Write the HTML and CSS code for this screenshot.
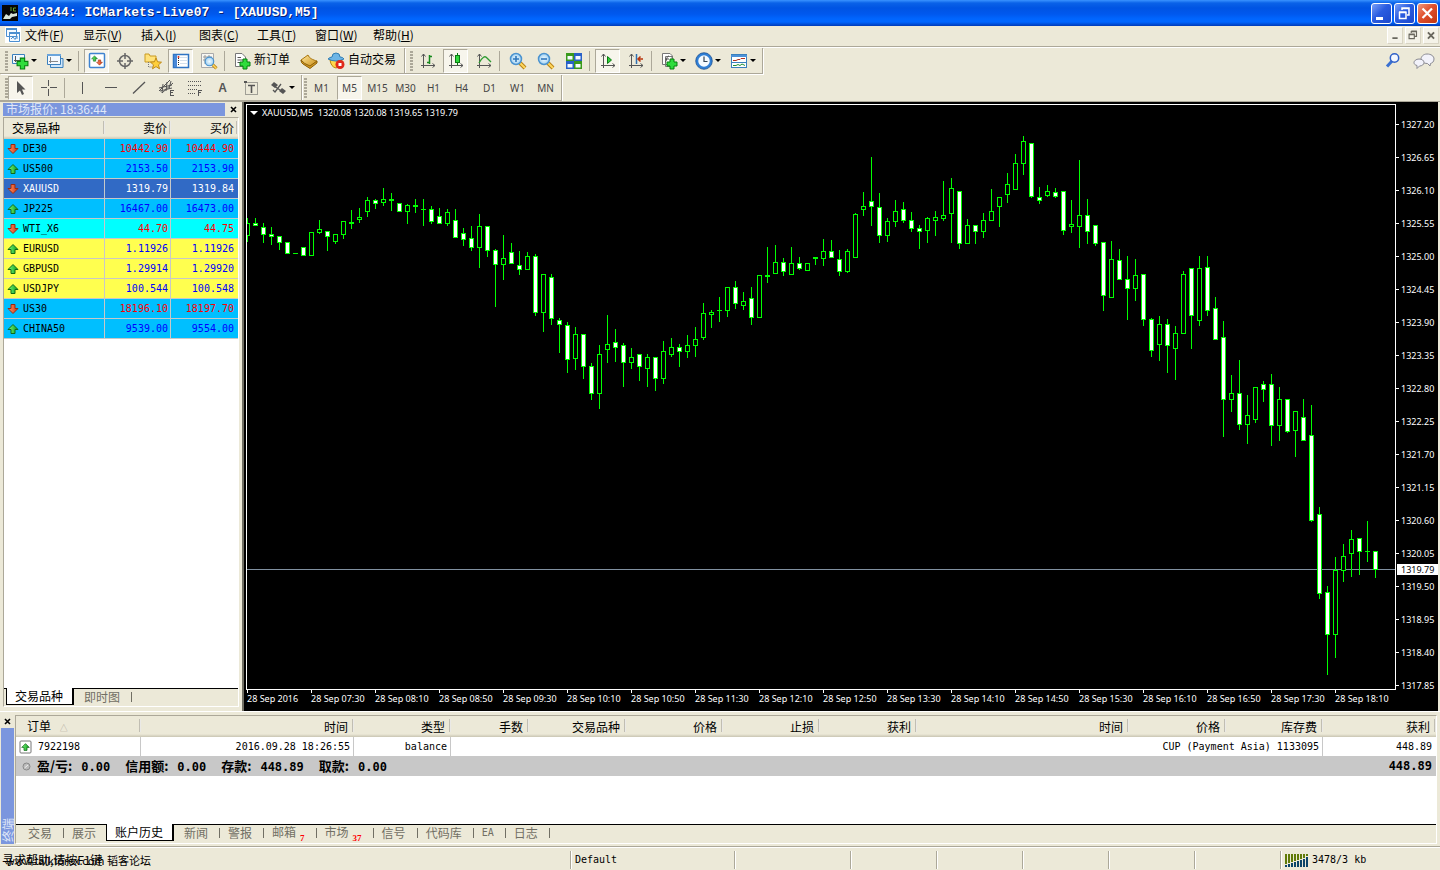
FILE: index.html
```html
<!DOCTYPE html>
<html lang="zh-CN">
<head>
<meta charset="utf-8">
<title>810344: ICMarkets-Live07 - [XAUUSD,M5]</title>
<link rel="stylesheet" href="styles.css">
</head>
<body>
<svg class="defs" aria-hidden="true">
  <defs>
    <linearGradient id="gUp" x1="0" x2="1"><stop offset="0" stop-color="#7dfc7d"/><stop offset="1" stop-color="#0a9a1a"/></linearGradient>
    <linearGradient id="gDown" x1="0" x2="1"><stop offset="0" stop-color="#ff9a70"/><stop offset="1" stop-color="#d63208"/></linearGradient>
    <linearGradient id="gGold" x1="0" x2="1" y2="1"><stop offset="0" stop-color="#ffe9a0"/><stop offset="1" stop-color="#c98a10"/></linearGradient>
    <radialGradient id="gGlass"><stop offset="0" stop-color="#f2fbff"/><stop offset="1" stop-color="#9fd0f2"/></radialGradient>
    <symbol id="up" viewBox="0 0 12 12"><path d="M6 1.500 11 6.500H8V10.500H4V6.500H1Z" fill="url(#gUp)" stroke="#106a18"/></symbol>
    <symbol id="down" viewBox="0 0 12 12"><path d="M6 10.500 11 5.500H8V1.500H4V5.500H1Z" fill="url(#gDown)" stroke="#9a2a10"/></symbol>
    <symbol id="plus" viewBox="0 0 12 12"><path d="M4 1H8V4H11V8H8V11H4V8H1V4H4Z" fill="#2fdc3c" stroke="#07800f"/></symbol>
    <symbol id="axes" viewBox="0 0 18 18"><path d="M4.500 2V16M2 13.500H16M2.500 4.500 4.500 2 6.500 4.500M13.500 11.500 16 13.500 13.500 15.500" fill="none" stroke="#555"/></symbol>
    <symbol id="lens" viewBox="0 0 18 18"><path d="M11 11 16 16" stroke="#b98316" stroke-width="4"/><path d="M11 11 16 16" stroke="#ffd75c" stroke-width="2"/><circle cx="7" cy="7" r="5.500" fill="url(#gGlass)" stroke="#4b93cf" stroke-width="1.500"/></symbol>
  </defs>
</svg>

<header class="titlebar">
  <svg class="app-icon" viewBox="0 0 16 16"><rect width="16" height="16" fill="#050505"/><path d="M1 14 4 9 7 11 9 8 11 9 15 8V11L10 12 8 14Z" fill="#d8e4d8"/><path d="M9 2V6M14 3H11.500V6H14" stroke="#65a52a" fill="none"/></svg>
  <h1 class="title">810344: ICMarkets-Live07 - [XAUUSD,M5]</h1>
  <div class="win-buttons">
    <button class="win" aria-label="最小化"><svg viewBox="0 0 19 19"><path d="M4 13H11V16H4Z" fill="#fff"/></svg></button>
    <button class="win" aria-label="还原"><svg viewBox="0 0 19 19"><path d="M7 6V4H14V11H12M4.500 8.500H11V14.500H4.500ZM4 8H11.500M7 4.500H14.500" fill="none" stroke="#fff" stroke-width="1.500"/></svg></button>
    <button class="win win-close" aria-label="关闭"><svg viewBox="0 0 19 19"><path d="M4.500 4.500 14 14M14 4.500 4.500 14" stroke="#fff" stroke-width="2.200"/></svg></button>
  </div>
</header>

<nav class="menubar">
  <svg class="doc-icon" viewBox="0 0 16 16"><rect width="16" height="16" fill="#fff"/><path d="M1.500 1.500H11.500V9.500H1.500ZM4.500 5.500H14.500V14.500H4.500Z" fill="#f4faff" stroke="#4b8fd0"/><path d="M1 2H12M4 6H15" stroke="#4b8fd0" stroke-width="2"/><path d="M6 12 8 10 10 12.500 12 9V12" fill="none" stroke="#4b8fd0"/></svg>
  <button class="menu">文件(<u>F</u>)</button>
  <button class="menu">显示(<u>V</u>)</button>
  <button class="menu">插入(<u>I</u>)</button>
  <button class="menu">图表(<u>C</u>)</button>
  <button class="menu">工具(<u>T</u>)</button>
  <button class="menu">窗口(<u>W</u>)</button>
  <button class="menu">帮助(<u>H</u>)</button>
  <div class="mdi-buttons">
    <button class="mdi" aria-label="最小化图表"><svg viewBox="0 0 16 16"><path d="M5 10H11V12H5Z" fill="#69675e"/></svg></button>
    <button class="mdi" aria-label="还原图表"><svg viewBox="0 0 16 16"><path d="M6 5V3.500H12V9H10M3.500 7H9.500V11.500H3.500ZM3 6.500H10M6 3H12.500" fill="none" stroke="#69675e" stroke-width="1.300"/></svg></button>
    <button class="mdi" aria-label="关闭图表"><svg viewBox="0 0 16 16"><path d="M4.500 4.500 11.500 11.500M11.500 4.500 4.500 11.500" stroke="#69675e" stroke-width="2.200"/></svg></button>
  </div>
</nav>

<div class="toolrow">
  <div class="toolbar main">
    <i class="grip"></i>
    <button class="tool drop" aria-label="新图表"><svg viewBox="0 0 18 18"><path d="M1.500 2.500H13.500V11.500H1.500Z" fill="#eef7ff" stroke="#3a80bd"/><path d="M4.500 4V10M3 8.500H9" stroke="#555"/><use href="#plus" x="5" y="5" width="13" height="13"/></svg><i class="caret"></i></button>
    <button class="tool drop" aria-label="图表配置"><svg viewBox="0 0 18 18"><path d="M4.500 6.500H17V15.500H4.500Z" fill="#cfe6fa" stroke="#3a80bd"/><path d="M1.500 2.500H14.500V12.500H1.500Z" fill="#f3f9ff" stroke="#3a80bd"/><path d="M1 3H15" stroke="#6aa5dc" stroke-width="2"/><path d="M4.500 5V11M3 9.500H12" stroke="#888"/></svg><i class="caret"></i></button>
    <i class="sep"></i>
    <button class="tool on" aria-label="市场报价"><svg viewBox="0 0 18 18"><rect x="1.500" y="1.500" width="15" height="14" rx="1" fill="#fff" stroke="#3f83d0" stroke-width="1.500"/><use href="#up" x="3" y="3" width="7" height="7"/><use href="#down" x="8" y="7" width="7" height="7"/></svg></button>
    <button class="tool" aria-label="数据窗口"><svg viewBox="0 0 18 18"><circle cx="9" cy="9" r="5.500" fill="none" stroke="#666" stroke-width="1.500"/><path d="M9 1V7M9 11V17M1 9H7M11 9H17" stroke="#666" stroke-width="1.500"/></svg></button>
    <button class="tool" aria-label="导航"><svg viewBox="0 0 18 18"><path d="M1 4V2H5L6 4H12V10H1Z" fill="#ffe27a" stroke="#c99a22"/><path d="M4.500 10V15H9" stroke="#777" stroke-dasharray="1 1" fill="none"/><path d="M12 6 13.600 9.800 17.500 10.200 14.500 12.800 15.500 16.800 12 14.600 8.500 16.800 9.500 12.800 6.500 10.200 10.400 9.800Z" fill="#ffcf3a" stroke="#c08a18"/></svg></button>
    <button class="tool on" aria-label="终端"><svg viewBox="0 0 18 18"><rect x="1.500" y="2.500" width="15" height="13" fill="#fff" stroke="#2f74c4" stroke-width="1.500"/><path d="M2 3H5V15H2Z" fill="#4a89d8"/><path d="M6.500 4V14" stroke="#222" stroke-dasharray="1 1"/><path d="M8 5.500H15M8 8.500H15M8 11.500H15" stroke="#d3dfec"/><circle cx="6.500" cy="5" r="1" fill="#e03020"/></svg></button>
    <button class="tool" aria-label="策略测试"><svg viewBox="0 0 18 18"><path d="M1.500 1.500H13.500V15.500H1.500Z" fill="#f7f7f2" stroke="#aaa"/><path d="M3 5H12M3 8H12M5 3V12M9 3V12" stroke="#999"/><use href="#lens" x="4" y="4" width="14" height="14"/></svg></button>
    <i class="sep"></i>
    <button class="tool label"><svg viewBox="0 0 18 18"><path d="M2.500 1.500H9L12.500 5V14.500H2.500Z" fill="#fff" stroke="#777"/><path d="M4.500 5.500H8M4.500 8H10M4.500 10.500H8" stroke="#555"/><use href="#plus" x="6" y="6" width="12" height="12"/></svg><span>新订单</span></button>
    <button class="tool" aria-label="MetaEditor"><svg viewBox="0 0 18 18"><path d="M1 8 8 3C9 6 13 8 17 9L10 15Q3 13 1 8Z" fill="url(#gGold)" stroke="#a8740c"/><path d="M1 8Q1 11 3 12L10 16.500 17 11V9L10 14Q4 12 1 8Z" fill="#d39a20" stroke="#8c5f0a"/></svg></button>
    <button class="tool label"><svg viewBox="0 0 18 18"><path d="M3 8Q4 15 9 16 14 15 15 8Z" fill="#ffd84a" stroke="#b8860b"/><path d="M1 7Q3 5 5 5 5 1 9 1 13 1 13 5 16 5 17 7 9 11 1 7Z" fill="#6db5e6" stroke="#337fb5"/><circle cx="13" cy="12.500" r="4.500" fill="#e02a1a"/><rect x="11.500" y="11" width="3" height="3" fill="#fff"/></svg><span>自动交易</span></button>
  </div>
  <div class="toolbar">
    <i class="grip"></i>
    <button class="tool" aria-label="柱状图"><svg viewBox="0 0 18 18"><use href="#axes"/><path d="M10.500 3V12M8 10.500H10.500M10.500 4.500H13" stroke="#16891c" stroke-width="1.500"/></svg></button>
    <button class="tool on" aria-label="阴阳烛"><svg viewBox="0 0 18 18"><use href="#axes"/><path d="M10.500 1V13" stroke="#0a7a12"/><rect x="8.500" y="3.500" width="4" height="7" fill="#2fd83c" stroke="#0a7a12"/></svg></button>
    <button class="tool" aria-label="折线图"><svg viewBox="0 0 18 18"><use href="#axes"/><path d="M4 11Q9 2 12 6L16 10" fill="none" stroke="#2b9a2f" stroke-width="1.300"/></svg></button>
    <i class="sep"></i>
    <button class="tool" aria-label="放大"><svg viewBox="0 0 18 18"><use href="#lens"/><path d="M4 7H10M7 4V10" stroke="#2f77bb" stroke-width="1.600"/></svg></button>
    <button class="tool" aria-label="缩小"><svg viewBox="0 0 18 18"><use href="#lens"/><path d="M4 7H10" stroke="#2f77bb" stroke-width="1.600"/></svg></button>
    <button class="tool" aria-label="平铺窗口"><svg viewBox="0 0 18 18"><path d="M1 1H9V9H1ZM9 9H17V17H9Z" fill="#3a9a1c"/><path d="M9 1H17V9H9ZM1 9H9V17H1Z" fill="#2860c8"/><path d="M2.500 4H7.500V7.500H2.500ZM10.500 4H15.500V7.500H10.500ZM2.500 12H7.500V15.500H2.500ZM10.500 12H15.500V15.500H10.500Z" fill="#f4fbff"/></svg></button>
    <i class="sep"></i>
    <button class="tool on" aria-label="自动滚动"><svg viewBox="0 0 18 18"><use href="#axes"/><path d="M8.500 4.500 12.500 8 8.500 11.500Z" fill="#30d038" stroke="#0a7a12"/></svg></button>
    <button class="tool" aria-label="图表平移"><svg viewBox="0 0 18 18"><use href="#axes"/><path d="M9.500 2V12" stroke="#2d6fb0" stroke-width="1.500"/><path d="M16 7H11M13.500 4.500 11 7 13.500 9.500" fill="none" stroke="#b8340c" stroke-width="1.500"/></svg></button>
    <i class="sep"></i>
    <button class="tool drop" aria-label="指标"><svg viewBox="0 0 18 18"><path d="M5.500 4.500H12V14.500H5.500ZM2.500 1.500H10L12.500 4V12.500H2.500Z" fill="#fff" stroke="#777"/><path d="M5 10C7 10 6 4 9 4M5 7H9" fill="none" stroke="#555"/><use href="#plus" x="6" y="6" width="12" height="12"/></svg><i class="caret"></i></button>
    <button class="tool drop" aria-label="时间周期"><svg viewBox="0 0 18 18"><circle cx="9" cy="9" r="7" fill="#f4faff" stroke="#2f7fd6" stroke-width="2.500"/><circle cx="9" cy="9" r="8.300" fill="none" stroke="#0f4488" stroke-width=".7"/><path d="M9 4.500V9.500H12.500" fill="none" stroke="#345" stroke-width="1.200"/></svg><i class="caret"></i></button>
    <button class="tool drop" aria-label="模板"><svg viewBox="0 0 18 18"><rect x="1.500" y="2.500" width="15" height="13" fill="#fff" stroke="#3a80bd"/><path d="M1 3H17V5H1Z" fill="#4d92d8"/><path d="M1 10.500H17" stroke="#3a80bd"/><path d="M3 8.500H6L8 7.500H10L11 6.500H15" fill="none" stroke="#b03020"/><path d="M3 13.500H6L8 12.500 10 13.500 12 12 15 13.500" fill="none" stroke="#209030"/></svg><i class="caret"></i></button>
  </div>
  <div class="tool-right">
    <button class="tool" aria-label="搜索"><svg viewBox="0 0 18 18"><path d="M8 9 3 14.500" stroke="#3a70d0" stroke-width="3"/><circle cx="10.500" cy="6" r="4.200" fill="#f3f7ff" stroke="#2f60c8" stroke-width="1.500"/></svg></button>
    <button class="tool chat" aria-label="聊天"><svg viewBox="0 0 22 18"><path d="M14 2C18 2 21 4 21 7S19 11 17.500 11.500L17 14 14.500 11.500C10 11.500 8 9 8 7S10 2 14 2Z" fill="#f2f2fa" stroke="#8a8a92"/><path d="M6 7C9 7 11 8.500 11 10.500S9 14 6.500 14L4 16.500V13.500C2 13 1 12 1 10.500S3 7 6 7Z" fill="#f2f2fa" stroke="#8a8a92"/></svg></button>
  </div>
</div>

<div class="toolrow">
  <div class="toolbar">
    <i class="grip"></i>
    <button class="tool on" aria-label="光标"><svg viewBox="0 0 18 18"><path d="M5 2 13.500 10.500H10L12 15 10 16 8 11.500 5 14Z" fill="#555"/></svg></button>
    <button class="tool" aria-label="十字准线"><svg viewBox="0 0 18 18"><path d="M8.500 1V7M8.500 10V17M1 8.500H7M10 8.500H17" stroke="#555"/></svg></button>
    <i class="sep"></i>
    <button class="tool" aria-label="垂直线"><svg viewBox="0 0 18 18"><path d="M8.500 3V15" stroke="#555"/></svg></button>
    <button class="tool" aria-label="水平线"><svg viewBox="0 0 18 18"><path d="M3 8.500H15" stroke="#555"/></svg></button>
    <button class="tool" aria-label="趋势线"><svg viewBox="0 0 18 18"><path d="M3 14.500 15 3" stroke="#555" stroke-width="1.300"/></svg></button>
    <button class="tool" aria-label="等距通道"><svg viewBox="0 0 18 18"><path d="M1 12 12 1M4 14 15 4M1 9 14 6M2 12 14 9M5 5 4 14M9 3 8 12M13 2 11 10" stroke="#555"/><path d="M12.500 11V16.500M12 11.500H16M12 13.500H15M12 16.500H16" stroke="#555"/></svg></button>
    <button class="tool" aria-label="斐波纳契"><svg viewBox="0 0 18 18"><path d="M2 2.500H16M2 6.500H16M2 10.500H12M2 14.500H10" stroke="#555" stroke-dasharray="1 1"/><path d="M12.500 11V17M12 11.500H16M12 13.500H15" stroke="#555"/></svg></button>
    <button class="tool glyph" aria-label="文字">A</button>
    <button class="tool" aria-label="文字标签"><svg viewBox="0 0 18 18"><rect x="3.500" y="3.500" width="12" height="12" fill="none" stroke="#555" stroke-dasharray="1 1"/><path d="M6 6.500H13M9.500 6V14" stroke="#555" stroke-width="1.600"/><path d="M2 2H5V4H2Z" fill="#555"/></svg></button>
    <button class="tool drop" aria-label="箭头"><svg viewBox="0 0 18 18"><path d="M5 3 9 6 6 9 2 6ZM13 9 17 12 14 15 10 12Z" fill="#555"/><path d="M4 11 6 13 12 5M5 7 14 13" fill="none" stroke="#555" stroke-width="1.300"/></svg><i class="caret"></i></button>
  </div>
  <div class="toolbar periods">
    <i class="grip"></i>
    <button class="tool period">M1</button>
    <button class="tool period on">M5</button>
    <button class="tool period">M15</button>
    <button class="tool period">M30</button>
    <button class="tool period">H1</button>
    <button class="tool period">H4</button>
    <button class="tool period">D1</button>
    <button class="tool period">W1</button>
    <button class="tool period">MN</button>
  </div>
</div>

<main class="workspace">
  <aside class="market">
    <div class="market-head"><h2 class="market-title">市场报价: 18:36:44</h2><button class="close" aria-label="关闭市场报价"><svg viewBox="0 0 7 7"><path d="M1 1 6 6M6 1 1 6" stroke="#000" stroke-width="1.600"/></svg></button></div>
    <div class="market-box">
      <div class="market-list">
        <table class="quotes">
          <colgroup><col><col class="bid"><col class="ask"></colgroup>
          <thead><tr><th>交易品种</th><th>卖价</th><th>买价</th></tr></thead>
          <tbody>
            <tr class="sky fall"><td><svg><use href="#down"/></svg>DE30</td><td>10442.90</td><td>10444.90</td></tr>
            <tr class="sky"><td><svg><use href="#up"/></svg>US500</td><td>2153.50</td><td>2153.90</td></tr>
            <tr class="picked"><td><svg><use href="#down"/></svg>XAUUSD</td><td>1319.79</td><td>1319.84</td></tr>
            <tr class="sky"><td><svg><use href="#up"/></svg>JP225</td><td>16467.00</td><td>16473.00</td></tr>
            <tr class="aqua fall"><td><svg><use href="#down"/></svg>WTI_X6</td><td>44.70</td><td>44.75</td></tr>
            <tr class="yellow"><td><svg><use href="#up"/></svg>EURUSD</td><td>1.11926</td><td>1.11926</td></tr>
            <tr class="yellow"><td><svg><use href="#up"/></svg>GBPUSD</td><td>1.29914</td><td>1.29920</td></tr>
            <tr class="yellow"><td><svg><use href="#up"/></svg>USDJPY</td><td>100.544</td><td>100.548</td></tr>
            <tr class="sky fall"><td><svg><use href="#down"/></svg>US30</td><td>18196.10</td><td>18197.70</td></tr>
            <tr class="sky"><td><svg><use href="#up"/></svg>CHINA50</td><td>9539.00</td><td>9554.00</td></tr>
          </tbody>
        </table>
      </div>
      <div class="tabs"><button class="tab active">交易品种</button><button class="tab">即时图</button></div>
    </div>
  </aside>

  <section class="chart">
    <div class="plot">
      <svg id="candles" class="candles" viewBox="247 105 1148 584" preserveAspectRatio="none"><path d="M247 569.500H1395" stroke="#8090a0"/></svg>
      <div class="chart-title"><i class="caret light"></i><span>XAUUSD,M5&nbsp; 1320.08 1320.08 1319.65 1319.79</span></div>
    </div>
    <div class="prices">
      <span>1327.20</span><span>1326.65</span><span>1326.10</span><span>1325.55</span><span>1325.00</span><span>1324.45</span><span>1323.90</span><span>1323.35</span><span>1322.80</span><span>1322.25</span><span>1321.70</span><span>1321.15</span><span>1320.60</span><span>1320.05</span><span>1319.50</span><span>1318.95</span><span>1318.40</span><span>1317.85</span>
      <b class="last">1319.79</b>
    </div>
    <div class="times">
      <span>28 Sep 2016</span><span>28 Sep 07:30</span><span>28 Sep 08:10</span><span>28 Sep 08:50</span><span>28 Sep 09:30</span><span>28 Sep 10:10</span><span>28 Sep 10:50</span><span>28 Sep 11:30</span><span>28 Sep 12:10</span><span>28 Sep 12:50</span><span>28 Sep 13:30</span><span>28 Sep 14:10</span><span>28 Sep 14:50</span><span>28 Sep 15:30</span><span>28 Sep 16:10</span><span>28 Sep 16:50</span><span>28 Sep 17:30</span><span>28 Sep 18:10</span>
    </div>
  </section>
</main>

<section class="terminal">
  <div class="side"><button class="close" aria-label="关闭终端"><svg viewBox="0 0 7 7"><path d="M1 1 6 6M6 1 1 6" stroke="#000" stroke-width="1.600"/></svg></button><h2 class="side-title">终端</h2></div>
  <div class="terminal-box">
    <div class="history-list">
      <table class="history">
        <colgroup><col class="w125"><col class="w213"><col class="w97"><col class="w78"><col class="w97"><col class="w97"><col class="w97"><col class="w97"><col><col class="w97"><col class="w97"><col class="w113"></colgroup>
        <thead><tr><th>订单 <span class="sort">△</span></th><th>时间</th><th>类型</th><th>手数</th><th>交易品种</th><th>价格</th><th>止损</th><th>获利</th><th>时间</th><th>价格</th><th>库存费</th><th>获利</th></tr></thead>
        <tbody>
          <tr><td><svg class="deal" viewBox="0 0 14 14"><rect x="1" y="1" width="11" height="12" rx="1" fill="#fff" stroke="#777"/><use href="#up" x="2" y="2" width="9" height="10"/></svg>7922198</td><td>2016.09.28 18:26:55</td><td>balance</td><td colspan="8">CUP (Payment Asia) 1133095</td><td>448.89</td></tr>
          <tr class="sum"><td colspan="11"><svg class="ball" viewBox="0 0 9 9"><circle cx="4.500" cy="4.500" r="3.500" fill="#bbb" stroke="#888"/><path d="M2.500 6 6 3" stroke="#eee"/></svg><span class="total">盈/亏: <kbd>0.00</kbd></span><span class="total">信用额: <kbd>0.00</kbd></span><span class="total">存款: <kbd>448.89</kbd></span><span class="total">取款: <kbd>0.00</kbd></span></td><td>448.89</td></tr>
        </tbody>
      </table>
    </div>
    <div class="tabs wide"><button class="tab">交易</button><button class="tab last-before">展示</button><button class="tab active">账户历史</button><button class="tab">新闻</button><button class="tab">警报</button><button class="tab">邮箱<sub>7</sub></button><button class="tab">市场<sub>37</sub></button><button class="tab">信号</button><button class="tab">代码库</button><button class="tab mono">EA</button><button class="tab">日志</button></div>
  </div>
</section>

<footer class="status">
  <div class="cell hint">寻求帮助,请按F1键<span class="watermark">www.talkforex.com 韬客论坛</span></div>
  <div class="cell w164 mono">Default</div>
  <div class="cell w116"></div>
  <div class="cell w86"></div>
  <div class="cell w86"></div>
  <div class="cell w86"></div>
  <div class="cell w86"></div>
  <div class="cell w86"></div>
  <div class="cell w160 mono"><svg class="traffic" viewBox="0 0 24 13"><g fill="#607a08"><path d="M0 0H2V10H0ZM3 0H5V9H3ZM6 0H8V8H6ZM9 0H11V7H9ZM12 0H14V6H12ZM15 0H17V5H15ZM18 0H20V4H18ZM21 0H23V2H21Z"/></g><g fill="#0c4468"><path d="M0 11H2V13H0ZM3 10H5V13H3ZM6 9H8V13H6ZM9 8H11V13H9ZM12 7H14V13H12ZM15 6H17V13H15ZM18 5H20V13H18ZM21 3H23V13H21Z"/></g></svg>3478/3 kb</div>
</footer>
<script src="chart.js"></script>
</body>
</html>
```
FILE: styles.css
```css
* { box-sizing: border-box; }
body {
  margin: 0;
  height: 100vh;
  display: flex;
  flex-direction: column;
  overflow: hidden;
  background: #ece9d8;
  color: #000;
  font: 12px/16px "Noto Sans CJK SC", sans-serif;
}
button { border: 0; padding: 0; margin: 0; background: none; font: inherit; color: inherit; }
h1, h2 { margin: 0; font: inherit; }
table { border-collapse: separate; border-spacing: 0; table-layout: fixed; width: 100%; }
svg { display: block; flex: none; }
.defs { position: absolute; width: 0; height: 0; }
.mono, .quotes td, .history td, kbd { font-family: "DejaVu Sans Mono", "Noto Sans CJK SC", monospace; font-size: 10px; }

.titlebar {
  flex: none;
  height: 26px;
  display: flex;
  align-items: center;
  gap: 4px;
  padding: 0 2px;
  background: linear-gradient(#3a93ff 0, #0a62e8 3px, #0054e3 8px, #0058ee 14px, #0066ff 19px, #0066ff 22px, #003bb8 26px);
}
.app-icon, .doc-icon { width: 16px; height: 16px; }
.title { flex: 1; color: #fff; font: bold 13px/20px "Liberation Mono", monospace; text-shadow: 1px 1px 0 #0a1f70; }
.win-buttons { display: flex; gap: 2px; }
.win { width: 21px; height: 21px; border: 1px solid #fff; border-radius: 3px; background: linear-gradient(135deg, #7aa0f8, #2a5ce0 45%, #1c48cc); }
.win-close { background: linear-gradient(135deg, #f09a80, #e0502c 45%, #c03610); }
.win svg { width: 19px; height: 19px; }

.menubar { flex: none; height: 21px; display: flex; align-items: center; padding: 0 1px 2px 5px; border-bottom: 1px solid #aca899; box-shadow: 0 1px 0 #fff; }
.doc-icon { margin-right: 4px; }
.menu { width: 58px; text-align: left; line-height: 18px; }
.mdi-buttons { margin-left: auto; display: flex; gap: 2px; }
.mdi { width: 16px; height: 17px; background: #f4f2e8; border: 1px solid #fff; border-right-color: #d8d4c4; border-bottom-color: #d8d4c4; }
.mdi svg { width: 14px; height: 15px; }

.toolrow { flex: none; height: 26px; display: flex; margin-top: 1px; }
.toolbar { display: flex; align-items: center; gap: 3px; padding: 0 3px 0 5px; border-right: 1px solid #aca899; border-bottom: 1px solid #aca899; box-shadow: 1px 1px 0 #fff; }
.toolbar + .toolbar { padding-left: 5px; }
.toolbar.main { padding-right: 5px; }
.toolbar.periods { padding-left: 2px; }
.grip { width: 3px; height: 20px; margin-right: -1px; background: repeating-linear-gradient(#aca899 0 2px, #ece9d8 2px 3px); }
.toolbar:first-child .grip { margin-right: -3px; }
.sep { width: 3px; height: 20px; border-left: 1px solid #aca899; }
.tool { flex: none; display: flex; align-items: center; justify-content: center; width: 25px; height: 24px; }
.tool svg { width: 18px; height: 18px; }
.tool.on { border: 1px solid #aca899; border-right-color: #fff; border-bottom-color: #fff; background: #f7f5ec; }
.drop { width: 32px; gap: 2px; }
.caret { width: 0; height: 0; border: 3px solid transparent; border-top-color: #000; border-bottom: 0; }
.label { width: auto; padding: 0 3px; gap: 3px; }
.label span { padding-bottom: 4px; }
.glyph { font: bold 12px/16px "Liberation Sans", sans-serif; color: #555; }
.period { font: 10px/16px "Noto Sans", sans-serif; color: #444; }
.tool-right { margin-left: auto; display: flex; align-items: center; gap: 6px; padding-right: 4px; }
.tool.chat svg { width: 22px; }

.workspace { flex: 1; min-height: 0; display: flex; border-top: 1px solid #aca899; border-bottom: 1px solid #fff; }
.market { flex: none; width: 242px; display: flex; flex-direction: column; padding: 1px 3px 4px 3px; }
.market-head { display: flex; gap: 4px; }
.market-title { width: 222px; height: 13px; padding-left: 3px; line-height: 12px; background: #7b96de; color: #dfe6f8; }
.close { width: 9px; height: 13px; display: flex; align-items: center; justify-content: center; }
.close svg { width: 7px; height: 7px; }
.market-box { flex: 1; min-height: 0; display: flex; flex-direction: column; margin-top: 1px; border: 1px solid #aca899; border-right-color: #fff; border-bottom-color: #fff; }
.market-list { flex: 1; min-height: 0; overflow: hidden; background: #fff; }
.quotes .bid { width: 66px; }
.quotes .ask { width: 67px; }
th { height: 21px; padding: 0 4px; font-weight: normal; text-align: right; line-height: 17px; background: linear-gradient(to right, #aca899, #fff) right 3px / 2px 13px no-repeat, linear-gradient(#ece9d8 18px, #c9c5b2); }
th:first-child { text-align: left; padding-left: 8px; }
.quotes th { padding-bottom: 3px; }
.quotes td { height: 20px; padding: 0 2px; border-bottom: 1px solid #c8c8c8; border-right: 1px solid #c8c8c8; text-align: right; color: #00f; line-height: 16px; }
.quotes td:last-child { border-right: 0; padding-right: 4px; }
.quotes td:first-child { display: flex; align-items: center; gap: 4px; padding-left: 3px; color: #000; }
.quotes svg { width: 12px; height: 12px; }
.sky { background: #00bfff; }
.aqua { background: #0ff; }
.yellow { background: #ffff4f; }
.quotes .fall td { color: #f00; }
.quotes .fall td:first-child { color: #000; }
.quotes .picked { background: #316ac5; }
.quotes .picked td, .quotes .picked td:first-child { color: #fff; }

.tabs { flex: none; display: flex; height: 18px; padding-left: 2px; border-top: 1px solid #000; }
.tab { position: relative; height: 15px; padding: 0 10px; line-height: 14px; color: #716f64; }
.tab.active { margin-top: -1px; height: 17px; padding: 0 9px 0 8px; background: #fff; color: #000; border: 1px solid #000; border-top: 0; border-right-width: 2px; }
.tab:not(.active)::after { content: ""; position: absolute; right: -2px; top: 3px; height: 10px; border-right: 1px solid #716f64; }
.tab.last-before::after { display: none; }
.tabs.wide { height: 19px; padding-left: 2px; }
.tab sub { color: #f00; font: bold 9px/9px "Liberation Serif", serif; margin-left: 4px; vertical-align: -4px; }

.chart { flex: 1; min-width: 0; display: grid; grid-template-columns: minmax(0, 1fr) 42px; grid-template-rows: minmax(0, 1fr) 21px; margin-right: 2px; padding: 2px 0 0 2px; background: #000; border-left: 2px solid #716f64; color: #fff; font: 9px/12px "Noto Sans", sans-serif; }
.plot { position: relative; border: 1px solid #fff; }
.candles { width: 100%; height: 100%; shape-rendering: crispEdges; }
.chart-title { position: absolute; left: 3px; top: 2px; display: flex; align-items: center; gap: 4px; }
.caret.light { border-width: 4px 4px 0; border-top-color: #fff; }
.prices { grid-row: 1 / 3; grid-column: 2; position: relative; display: flex; flex-direction: column; padding-top: 4px; overflow: hidden; }
.prices span { flex: none; height: 33px; line-height: 33px; padding-left: 5px; background: linear-gradient(#fff, #fff) 0 16px / 3px 1px no-repeat; }
.last { position: absolute; left: 1px; right: 0; top: 460px; padding-left: 4px; background: #fff; color: #000; font-weight: normal; line-height: 11px; }
.times { grid-column: 1; display: flex; overflow: hidden; padding-left: 1px; }
.times span { flex: none; width: 64px; padding-top: 3px; white-space: nowrap; background: linear-gradient(#fff, #fff) 0 0 / 1px 3px no-repeat; }

.terminal { flex: none; display: flex; padding: 3px 3px 1px 0; }
.side { flex: none; width: 15px; display: flex; flex-direction: column; padding-left: 1px; }
.side .close { width: 12px; }
.side-title { flex: 1; width: 13px; padding-top: 2px; background: #7b96de; color: #dfe6f8; font-size: 12px; line-height: 13px; writing-mode: vertical-rl; text-orientation: sideways; transform: rotate(180deg); }
.terminal-box { flex: 1; min-width: 0; border: 1px solid #aca899; border-right-color: #fff; border-bottom-color: #fff; }
.history-list { height: 108px; background: #fff; }
.w125 { width: 125px; } .w213 { width: 213px; } .w97 { width: 97px; } .w78 { width: 78px; } .w113 { width: 113px; }
.history th { padding-right: 6px; }
.history th:first-child { padding-left: 11px; }
.history td { height: 19px; padding: 0 3px; text-align: right; border-right: 1px solid #c8c8c8; line-height: 16px; }
.history td:last-child { border-right: 0; padding-right: 4px; }
.history td:first-child { display: flex; align-items: center; gap: 5px; text-align: left; }
.sort { margin-left: 6px; font-size: 8px; color: #aca899; }
.deal { width: 14px; height: 14px; }
.history .sum td { display: table-cell; height: 20px; border: 0; background: #c8c8c8; font-weight: bold; font-size: 12px; }
.history .sum td:last-child { font-size: 12px; }
.ball { display: inline-block; width: 9px; height: 9px; margin: 0 6px 0 3px; }
.total { margin-right: 15px; font: bold 13px/16px "Noto Sans CJK SC", sans-serif; }
.total kbd { margin-left: 6px; font-size: 12px; }

.status { flex: none; display: flex; height: 24px; margin-top: 1px; padding-top: 4px; border-top: 1px solid #aca899; box-shadow: inset 0 1px 0 #fff; }
.cell { flex: none; height: 18px; display: flex; align-items: center; gap: 3px; padding-left: 4px; border-left: 1px solid #aca899; box-shadow: inset 1px 0 0 #fff; white-space: nowrap; }
.hint { position: relative; flex: 1; border: 0; box-shadow: none; padding-left: 2px; }
.watermark { position: absolute; left: 6px; top: 1px; font-size: 11px; line-height: 16px; }
.w164 { width: 164px; } .w116 { width: 116px; } .w86 { width: 86px; } .w160 { width: 160px; }
.traffic { width: 24px; height: 13px; }
```
FILE: chart.js
```js
// Each bar: high, body top, body bottom, low, kind (1 = falling, 0 = rising).
const bars = `218,223,236,242,0 218,223,226,226,1 223,227,235,243,1 227,234,237,245,1 236,236,243,250,1 242,242,254,254,1 253,253,254,254,0 247,247,256,256,1 232,232,256,256,0 220,229,233,234,0
231,231,237,251,1 234,234,242,244,0 221,221,235,239,0 210,222,224,229,0 208,217,220,223,0 197,200,212,217,0 199,200,204,209,1 188,199,203,206,0 193,199,201,211,0 203,203,212,212,1
204,205,212,224,0 199,205,207,213,0 199,209,210,226,0 206,209,222,224,1 208,216,224,224,1 209,212,224,226,0 209,220,238,238,1 228,233,240,246,1 226,238,248,251,1 214,226,248,268,0
226,226,251,257,1 249,250,265,307,1 235,258,265,280,0 243,252,264,264,1 251,265,270,275,1 252,256,270,270,0 254,256,313,316,1 274,274,313,332,0 274,277,319,325,1 318,320,325,353,1
322,325,360,373,1 327,334,359,370,0 334,334,367,379,1 363,366,394,400,1 345,354,394,409,0 315,344,350,363,0 329,342,348,362,1 343,345,363,387,1 348,357,363,369,0 354,354,367,381,1
354,357,369,387,0 357,357,379,391,1 341,351,379,384,0 338,347,355,357,0 344,347,352,367,1 335,345,352,358,0 327,339,346,357,0 303,313,338,340,0 310,312,315,328,0 297,310,311,322,0
287,287,311,317,0 281,287,304,309,1 292,301,306,310,0 287,298,318,325,1 275,275,318,318,0 247,275,277,283,0 245,262,274,274,0 258,262,272,276,1 247,263,275,275,0 257,263,269,270,1
263,263,271,271,0 257,257,259,265,0 239,251,259,266,0 240,251,258,258,1 250,259,272,276,1 249,251,272,273,0 213,214,258,258,0 192,206,210,216,0 157,201,207,226,1 193,207,236,243,1
218,221,236,242,0 200,211,222,227,0 202,209,221,223,1 212,220,229,232,1 225,228,232,249,1 217,218,231,243,0 211,217,221,236,0 181,215,219,221,0 178,188,214,243,0 191,191,244,249,1
219,225,244,244,0 225,225,232,244,1 213,220,232,238,0 189,211,221,221,0 197,197,207,227,0 173,184,195,203,0 154,163,190,190,0 136,141,164,175,0 143,143,197,198,1 187,197,201,204,1
185,191,196,197,0 188,192,197,198,1 191,191,231,235,1 200,224,227,233,0 160,215,227,248,0 199,215,232,244,1 225,225,244,246,1 242,242,296,311,1 241,259,298,298,0 249,260,280,280,1
256,279,289,320,1 259,275,289,301,0 274,274,320,326,1 318,319,351,357,1 316,324,345,361,0 319,324,346,373,1 326,333,349,380,0 271,274,334,334,0 268,268,316,349,1 256,268,321,326,0
256,267,311,316,1 297,308,340,340,1 321,337,400,437,1 375,393,400,412,0 360,393,425,430,1 395,415,425,444,0 387,387,420,423,0 381,384,390,402,1 374,384,426,446,1 387,399,426,441,0
399,399,432,433,1 411,411,431,457,0 399,417,441,441,1 405,435,521,522,1 507,514,594,599,1 586,592,635,675,1 557,570,635,658,0 544,556,571,582,0 530,539,554,577,0 538,538,552,575,1
521,551,552,562,0 551,551,570,578,1`.split(/\s+/).map(b => b.split(",").map(Number));

const svg = document.getElementById("candles");
const rect = (x, y, width, height, fill) => {
  if (height <= 0) return;
  const r = document.createElementNS("http://www.w3.org/2000/svg", "rect");
  Object.entries({ x, y, width, height, fill }).forEach(([k, v]) => r.setAttribute(k, v));
  svg.appendChild(r);
};
bars.forEach(([high, top, bottom, low, falling], i) => {
  const x = 247 + i * 8;
  rect(x, high, 1, low - high, "#00ff00");
  rect(x - 2, top, 5, bottom - top, "#00ff00");
  rect(x - 1, top + 1, 3, bottom - top - 2, falling ? "#ffffff" : "#000000");
});
```
